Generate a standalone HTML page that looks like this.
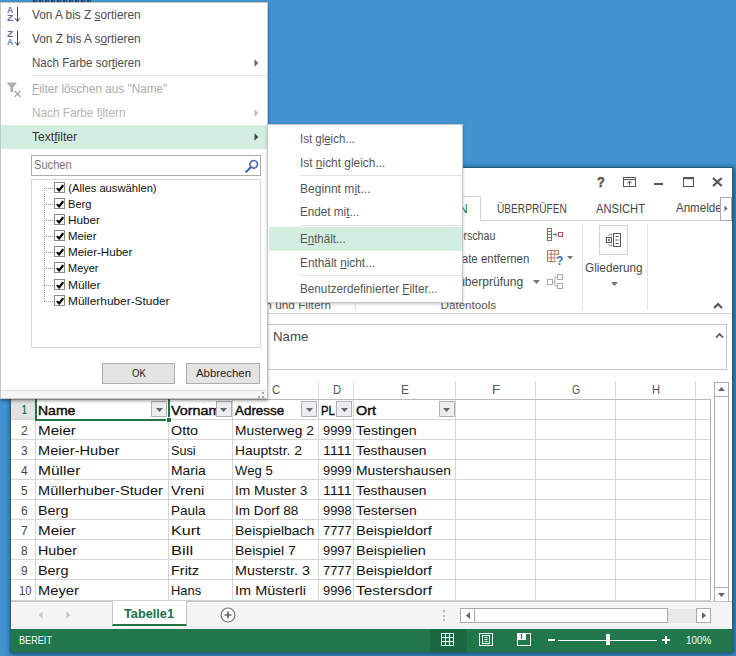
<!DOCTYPE html>
<html lang="de"><head><meta charset="utf-8"><title>Excel Textfilter</title><style>
html,body{margin:0;padding:0}
body{width:736px;height:656px;overflow:hidden;position:relative;background:#4393D1;font-family:"Liberation Sans",sans-serif}
.r{position:absolute;box-sizing:border-box}
.t{position:absolute;white-space:nowrap;line-height:1;transform-origin:0 0}
.t u{text-decoration:underline;text-underline-offset:1px}
.clip{position:absolute;overflow:hidden}
</style></head><body>
<div class="r " style="left:11.00px;top:168.00px;width:721.00px;height:484.00px;background:#fff;box-shadow:0 0 0 1px #255f78,1px 1px 5px 2px rgba(20,80,105,.9);"></div>
<span class="t" style="left:596.60px;top:174.73px;font-size:14.50px;color:#595959;font-weight:bold;transform:scaleX(0.8808);-webkit-text-stroke:0.5px #595959;">?</span>
<svg class="r" style="left:623.00px;top:177.00px" width="14" height="11" viewBox="0 0 14 11"><rect x="0.5" y="0.5" width="12" height="9" fill="none" stroke="#555"/><path d="M0.5 2.5H12.5" stroke="#555"/><path d="M6.5 8.5V4.2M4.3 6.2L6.5 4 8.7 6.2" fill="none" stroke="#555"/></svg>
<div class="r " style="left:654.00px;top:182.50px;width:9.00px;height:2.00px;background:#555;"></div>
<svg class="r" style="left:683.00px;top:177.00px" width="11" height="10" viewBox="0 0 11 10"><rect x="0.5" y="0.5" width="10" height="9" fill="none" stroke="#555"/><rect x="0" y="0" width="11" height="2.2" fill="#555"/></svg>
<svg class="r" style="left:712.00px;top:177.00px" width="11" height="10" viewBox="0 0 11 10"><path d="M1 1L9.7 9M9.7 1L1 9" stroke="#555" stroke-width="2.2"/></svg>
<div class="r " style="left:11.00px;top:220.00px;width:721.00px;height:1.00px;background:#D4D4D4;"></div>
<div class="r " style="left:420.00px;top:196.00px;width:60.50px;height:25.00px;background:#fff;border:1px solid #D4D4D4;border-bottom:none;"></div>
<span class="t" style="left:427.50px;top:201.54px;font-size:13.30px;color:#217346;transform:scaleX(0.8959);">DATEN</span>
<span class="t" style="left:496.60px;top:201.54px;font-size:13.30px;color:#444;transform:scaleX(0.7617);">ÜBERPRÜFEN</span>
<span class="t" style="left:596.00px;top:201.54px;font-size:13.30px;color:#444;transform:scaleX(0.8394);">ANSICHT</span>
<span class="t" style="left:675.50px;top:200.74px;font-size:13.30px;color:#444;transform:scaleX(0.8684);">Anmelden</span>
<div class="r " style="left:720.00px;top:196.50px;width:11.50px;height:24.00px;background:#fff;border:1px solid #ABABAB;"></div>
<svg class="r" style="left:723.50px;top:205.00px" width="4" height="7" viewBox="0 0 4 7"><path d="M0.5 0.5L3.5 3.5 0.5 6.5Z" fill="#666"/></svg>
<span class="t" style="left:432.40px;top:229.84px;font-size:12.00px;color:#4a4a4a;transform:scaleX(0.8883);">Blitzvorschau</span>
<span class="t" style="left:430.28px;top:252.84px;font-size:12.00px;color:#4a4a4a;transform:scaleX(0.9541);">Duplikate entfernen</span>
<span class="t" style="left:426.03px;top:275.84px;font-size:12.00px;color:#4a4a4a;transform:scaleX(1.0042);">Datenüberprüfung</span>
<svg class="r" style="left:533.00px;top:279.50px" width="7" height="4" viewBox="0 0 7 4"><path d="M0 0H7L3.5 4Z" fill="#777"/></svg>
<svg class="r" style="left:546.50px;top:227.50px" width="17" height="14" viewBox="0 0 17 14"><g fill="none" stroke="#9a6a56"><rect x="0.5" y="0.5" width="4" height="12"/><path d="M0.5 3.5H4.5M0.5 6.5H4.5M0.5 9.5H4.5"/><rect x="11.5" y="4.5" width="4" height="4" stroke="#c0504d"/></g><path d="M6 6.5H9.5M8.5 5L10 6.5 8.5 8" stroke="#4a7ab5" fill="none"/></svg>
<svg class="r" style="left:546.50px;top:250.00px" width="27" height="15" viewBox="0 0 27 15"><g fill="none" stroke="#b47a5a"><rect x="0.5" y="0.5" width="11" height="11"/><path d="M0.5 4.2H11.5M0.5 7.9H11.5M4.2 0.5V11.5M7.9 0.5V11.5"/></g><rect x="8.5" y="5" width="8" height="10" fill="#fff"/><text x="9" y="14.5" font-size="12" font-weight="bold" fill="#3b6fb5" font-family="Liberation Sans, sans-serif">?</text><path d="M20 6H26L23 9.5Z" fill="#777"/></svg>
<svg class="r" style="left:546.50px;top:273.50px" width="17" height="16" viewBox="0 0 17 16"><g fill="none" stroke="#aaa"><rect x="0.5" y="5.5" width="5" height="5"/><rect x="10.5" y="0.5" width="5" height="5"/><rect x="10.5" y="9.5" width="5" height="5"/><path d="M5.5 8H8M8 3V12M8 3H10.5M8 12H10.5"/></g></svg>
<div class="r " style="left:355.00px;top:224.00px;width:1.00px;height:86.00px;background:#E2E2E2;"></div>
<div class="r " style="left:581.50px;top:224.00px;width:1.00px;height:86.00px;background:#E2E2E2;"></div>
<div class="r " style="left:646.50px;top:224.00px;width:1.00px;height:86.00px;background:#E2E2E2;"></div>
<div class="r " style="left:598.50px;top:225.00px;width:29.50px;height:30.00px;background:#fff;border:1px solid #D4D4D4;"></div>
<svg class="r" style="left:606.00px;top:232.50px" width="16" height="15" viewBox="0 0 16 15"><g fill="none" stroke="#555"><rect x="7.5" y="0.5" width="7" height="13"/><path d="M9.5 3.5H12.5M9.5 7H12.5M9.5 10.5H12.5"/><rect x="0.5" y="4.5" width="5" height="5"/><path d="M1.8 7H4.2M3 5.8V8.2"/><path d="M3 2.5V1.5H6M3 11.5V12.5H6" stroke-dasharray="1.5 1"/></g></svg>
<span class="t" style="left:585.00px;top:261.84px;font-size:12.00px;color:#4a4a4a;transform:scaleX(0.9792);">Gliederung</span>
<svg class="r" style="left:611.00px;top:281.80px" width="7" height="4" viewBox="0 0 7 4"><path d="M0 0H7L3.5 4Z" fill="#777"/></svg>
<span class="t" style="left:224.00px;top:298.68px;font-size:11.60px;color:#555;transform:scaleX(1.0183);">Sortieren und Filtern</span>
<span class="t" style="left:440.60px;top:298.68px;font-size:11.60px;color:#555;">Datentools</span>
<svg class="r" style="left:713.00px;top:301.50px" width="10" height="7" viewBox="0 0 10 7"><path d="M1 6L5 2 9 6" fill="none" stroke="#555" stroke-width="2"/></svg>
<div class="r " style="left:11.00px;top:313.00px;width:721.00px;height:1.00px;background:#D4D4D4;"></div>
<div class="r " style="left:100.00px;top:324.00px;width:627.00px;height:45.50px;background:#fff;border:1px solid #C6C6C6;"></div>
<span class="t" style="left:273.40px;top:330.86px;font-size:12.80px;color:#444;transform:scaleX(1.0369);">Name</span>
<svg class="r" style="left:714.50px;top:332.00px" width="9" height="7" viewBox="0 0 9 7"><path d="M1 5.5L4.5 2 8 5.5" fill="none" stroke="#666" stroke-width="1.8"/></svg>
<span class="t" style="left:98.55px;top:383.67px;font-size:12.20px;color:#555;transform:scaleX(0.9922);">A</span>
<span class="t" style="left:197.05px;top:383.67px;font-size:12.20px;color:#555;transform:scaleX(0.9922);">B</span>
<span class="t" style="left:272.05px;top:383.67px;font-size:12.20px;color:#555;transform:scaleX(0.9164);">C</span>
<span class="t" style="left:332.55px;top:383.67px;font-size:12.20px;color:#555;transform:scaleX(0.9164);">D</span>
<span class="t" style="left:401.05px;top:383.67px;font-size:12.20px;color:#555;transform:scaleX(0.9922);">E</span>
<span class="t" style="left:492.05px;top:383.67px;font-size:12.20px;color:#555;transform:scaleX(1.0833);">F</span>
<span class="t" style="left:572.05px;top:383.67px;font-size:12.20px;color:#555;transform:scaleX(0.8510);">G</span>
<span class="t" style="left:652.05px;top:383.67px;font-size:12.20px;color:#555;transform:scaleX(0.9164);">H</span>
<div class="r " style="left:168.00px;top:381.00px;width:1.00px;height:18.00px;background:#DADADA;"></div>
<div class="r " style="left:232.00px;top:381.00px;width:1.00px;height:18.00px;background:#DADADA;"></div>
<div class="r " style="left:318.00px;top:381.00px;width:1.00px;height:18.00px;background:#DADADA;"></div>
<div class="r " style="left:353.00px;top:381.00px;width:1.00px;height:18.00px;background:#DADADA;"></div>
<div class="r " style="left:455.00px;top:381.00px;width:1.00px;height:18.00px;background:#DADADA;"></div>
<div class="r " style="left:535.00px;top:381.00px;width:1.00px;height:18.00px;background:#DADADA;"></div>
<div class="r " style="left:615.00px;top:381.00px;width:1.00px;height:18.00px;background:#DADADA;"></div>
<div class="r " style="left:695.00px;top:381.00px;width:1.00px;height:18.00px;background:#DADADA;"></div>
<div class="r " style="left:11.00px;top:400.00px;width:24.00px;height:200.00px;background:#fff;"></div>
<div class="r " style="left:11.00px;top:400.00px;width:24.00px;height:19.00px;background:#E1E1E1;"></div>
<div class="r " style="left:11.00px;top:419.00px;width:700.00px;height:1.00px;background:#D6D6D6;"></div>
<div class="r " style="left:11.00px;top:439.00px;width:700.00px;height:1.00px;background:#D6D6D6;"></div>
<div class="r " style="left:11.00px;top:459.00px;width:700.00px;height:1.00px;background:#D6D6D6;"></div>
<div class="r " style="left:11.00px;top:479.00px;width:700.00px;height:1.00px;background:#D6D6D6;"></div>
<div class="r " style="left:11.00px;top:499.00px;width:700.00px;height:1.00px;background:#D6D6D6;"></div>
<div class="r " style="left:11.00px;top:519.00px;width:700.00px;height:1.00px;background:#D6D6D6;"></div>
<div class="r " style="left:11.00px;top:539.00px;width:700.00px;height:1.00px;background:#D6D6D6;"></div>
<div class="r " style="left:11.00px;top:559.00px;width:700.00px;height:1.00px;background:#D6D6D6;"></div>
<div class="r " style="left:11.00px;top:579.00px;width:700.00px;height:1.00px;background:#D6D6D6;"></div>
<div class="r " style="left:35.00px;top:400.00px;width:1.00px;height:200.00px;background:#D6D6D6;"></div>
<div class="r " style="left:168.00px;top:400.00px;width:1.00px;height:200.00px;background:#D6D6D6;"></div>
<div class="r " style="left:232.00px;top:400.00px;width:1.00px;height:200.00px;background:#D6D6D6;"></div>
<div class="r " style="left:318.00px;top:400.00px;width:1.00px;height:200.00px;background:#D6D6D6;"></div>
<div class="r " style="left:353.00px;top:400.00px;width:1.00px;height:200.00px;background:#D6D6D6;"></div>
<div class="r " style="left:455.00px;top:400.00px;width:1.00px;height:200.00px;background:#D6D6D6;"></div>
<div class="r " style="left:535.00px;top:400.00px;width:1.00px;height:200.00px;background:#D6D6D6;"></div>
<div class="r " style="left:615.00px;top:400.00px;width:1.00px;height:200.00px;background:#D6D6D6;"></div>
<div class="r " style="left:695.00px;top:400.00px;width:1.00px;height:200.00px;background:#D6D6D6;"></div>
<div class="r " style="left:11.00px;top:399.00px;width:700.00px;height:1.00px;background:#BBBBBB;"></div>
<div class="r " style="left:710.00px;top:399.00px;width:1.00px;height:202.00px;background:#ABABAB;"></div>
<div class="r " style="left:11.00px;top:600.00px;width:700.00px;height:1.00px;background:#CFCFCF;"></div>
<span class="t" style="left:21.50px;top:403.36px;font-size:13.40px;color:#217346;font-weight:bold;transform:scaleX(0.6173);">1</span>
<span class="t" style="left:20.90px;top:423.60px;font-size:13.00px;color:#444;transform:scaleX(0.9128);">2</span>
<span class="t" style="left:20.90px;top:443.60px;font-size:13.00px;color:#444;transform:scaleX(0.9128);">3</span>
<span class="t" style="left:20.90px;top:463.60px;font-size:13.00px;color:#444;transform:scaleX(0.9128);">4</span>
<span class="t" style="left:20.90px;top:483.60px;font-size:13.00px;color:#444;transform:scaleX(0.9128);">5</span>
<span class="t" style="left:20.90px;top:503.60px;font-size:13.00px;color:#444;transform:scaleX(0.9128);">6</span>
<span class="t" style="left:20.90px;top:523.60px;font-size:13.00px;color:#444;transform:scaleX(0.9128);">7</span>
<span class="t" style="left:20.90px;top:543.60px;font-size:13.00px;color:#444;transform:scaleX(0.9128);">8</span>
<span class="t" style="left:20.90px;top:563.60px;font-size:13.00px;color:#444;transform:scaleX(0.9128);">9</span>
<span class="t" style="left:19.15px;top:583.60px;font-size:13.00px;color:#444;transform:scaleX(0.8644);">10</span>
<span class="t" style="left:38.40px;top:403.60px;font-size:13.00px;color:#111;transform:scaleX(1.0757);-webkit-text-stroke:0.45px #111;">Name</span>
<div class="clip" style="left:170.70px;top:403.60px;width:45.00px;height:15.60px"><span class="t" style="left:0;top:0;font-size:13.00px;color:#111;-webkit-text-stroke:0.45px #111;transform:scaleX(1.1051);">Vorname</span></div>
<div class="clip" style="left:320.70px;top:403.60px;width:14.20px;height:15.60px"><span class="t" style="left:0;top:0;font-size:13.00px;color:#111;-webkit-text-stroke:0.45px #111;transform:scaleX(0.8640);">PLZ</span></div>
<span class="t" style="left:234.50px;top:403.60px;font-size:13.00px;color:#111;transform:scaleX(1.0316);-webkit-text-stroke:0.45px #111;">Adresse</span>
<span class="t" style="left:355.60px;top:403.60px;font-size:13.00px;color:#111;transform:scaleX(1.1022);-webkit-text-stroke:0.45px #111;">Ort</span>
<span class="t" style="left:38.40px;top:423.60px;font-size:13.00px;color:#111;transform:scaleX(1.1660);">Meier</span>
<span class="t" style="left:170.50px;top:423.60px;font-size:13.00px;color:#111;transform:scaleX(1.1030);">Otto</span>
<span class="t" style="left:322.80px;top:423.60px;font-size:13.00px;color:#111;transform:scaleX(0.9889);">9999</span>
<span class="t" style="left:234.50px;top:423.60px;font-size:13.00px;color:#111;transform:scaleX(1.0602);">Musterweg 2</span>
<span class="t" style="left:355.60px;top:423.60px;font-size:13.00px;color:#111;transform:scaleX(1.0907);">Testingen</span>
<span class="t" style="left:38.40px;top:443.60px;font-size:13.00px;color:#111;transform:scaleX(1.1268);">Meier-Huber</span>
<span class="t" style="left:170.50px;top:443.60px;font-size:13.00px;color:#111;transform:scaleX(0.9728);">Susi</span>
<span class="t" style="left:322.80px;top:443.60px;font-size:13.00px;color:#111;transform:scaleX(1.0988);">1111</span>
<span class="t" style="left:234.50px;top:443.60px;font-size:13.00px;color:#111;transform:scaleX(1.0641);">Hauptstr. 2</span>
<span class="t" style="left:355.60px;top:443.60px;font-size:13.00px;color:#111;transform:scaleX(1.0602);">Testhausen</span>
<span class="t" style="left:38.40px;top:463.60px;font-size:13.00px;color:#111;transform:scaleX(1.1952);">Müller</span>
<span class="t" style="left:170.50px;top:463.60px;font-size:13.00px;color:#111;transform:scaleX(1.0706);">Maria</span>
<span class="t" style="left:322.80px;top:463.60px;font-size:13.00px;color:#111;transform:scaleX(0.9889);">9999</span>
<span class="t" style="left:234.50px;top:463.60px;font-size:13.00px;color:#111;transform:scaleX(1.0096);">Weg 5</span>
<span class="t" style="left:355.60px;top:463.60px;font-size:13.00px;color:#111;transform:scaleX(1.0677);">Mustershausen</span>
<span class="t" style="left:38.40px;top:483.60px;font-size:13.00px;color:#111;transform:scaleX(1.1225);">Müllerhuber-Studer</span>
<span class="t" style="left:170.50px;top:483.60px;font-size:13.00px;color:#111;transform:scaleX(1.1149);">Vreni</span>
<span class="t" style="left:322.80px;top:483.60px;font-size:13.00px;color:#111;transform:scaleX(1.0988);">1111</span>
<span class="t" style="left:234.50px;top:483.60px;font-size:13.00px;color:#111;transform:scaleX(1.0564);">Im Muster 3</span>
<span class="t" style="left:355.60px;top:483.60px;font-size:13.00px;color:#111;transform:scaleX(1.0602);">Testhausen</span>
<span class="t" style="left:38.40px;top:503.60px;font-size:13.00px;color:#111;transform:scaleX(1.1070);">Berg</span>
<span class="t" style="left:170.50px;top:503.60px;font-size:13.00px;color:#111;transform:scaleX(1.0406);">Paula</span>
<span class="t" style="left:322.80px;top:503.60px;font-size:13.00px;color:#111;transform:scaleX(0.9889);">9998</span>
<span class="t" style="left:234.50px;top:503.60px;font-size:13.00px;color:#111;transform:scaleX(1.0447);">Im Dorf 88</span>
<span class="t" style="left:355.60px;top:503.60px;font-size:13.00px;color:#111;transform:scaleX(1.0805);">Testersen</span>
<span class="t" style="left:38.40px;top:523.60px;font-size:13.00px;color:#111;transform:scaleX(1.1660);">Meier</span>
<span class="t" style="left:170.50px;top:523.60px;font-size:13.00px;color:#111;transform:scaleX(1.2414);">Kurt</span>
<span class="t" style="left:322.80px;top:523.60px;font-size:13.00px;color:#111;transform:scaleX(0.9889);">7777</span>
<span class="t" style="left:234.50px;top:523.60px;font-size:13.00px;color:#111;transform:scaleX(1.0771);">Beispielbach</span>
<span class="t" style="left:355.60px;top:523.60px;font-size:13.00px;color:#111;transform:scaleX(1.1174);">Beispieldorf</span>
<span class="t" style="left:38.40px;top:543.60px;font-size:13.00px;color:#111;transform:scaleX(1.0987);">Huber</span>
<span class="t" style="left:170.50px;top:543.60px;font-size:13.00px;color:#111;transform:scaleX(1.2751);">Bill</span>
<span class="t" style="left:322.80px;top:543.60px;font-size:13.00px;color:#111;transform:scaleX(0.9889);">9997</span>
<span class="t" style="left:234.50px;top:543.60px;font-size:13.00px;color:#111;transform:scaleX(1.0804);">Beispiel 7</span>
<span class="t" style="left:355.60px;top:543.60px;font-size:13.00px;color:#111;transform:scaleX(1.1118);">Beispielien</span>
<span class="t" style="left:38.40px;top:563.60px;font-size:13.00px;color:#111;transform:scaleX(1.1070);">Berg</span>
<span class="t" style="left:170.50px;top:563.60px;font-size:13.00px;color:#111;transform:scaleX(1.1120);">Fritz</span>
<span class="t" style="left:322.80px;top:563.60px;font-size:13.00px;color:#111;transform:scaleX(0.9889);">7777</span>
<span class="t" style="left:234.50px;top:563.60px;font-size:13.00px;color:#111;transform:scaleX(1.1029);">Musterstr. 3</span>
<span class="t" style="left:355.60px;top:563.60px;font-size:13.00px;color:#111;transform:scaleX(1.1174);">Beispieldorf</span>
<span class="t" style="left:38.40px;top:583.60px;font-size:13.00px;color:#111;transform:scaleX(1.1324);">Meyer</span>
<span class="t" style="left:170.50px;top:583.60px;font-size:13.00px;color:#111;transform:scaleX(0.9918);">Hans</span>
<span class="t" style="left:322.80px;top:583.60px;font-size:13.00px;color:#111;transform:scaleX(0.9889);">9996</span>
<span class="t" style="left:234.50px;top:583.60px;font-size:13.00px;color:#111;transform:scaleX(1.1155);">Im Müsterli</span>
<span class="t" style="left:355.60px;top:583.60px;font-size:13.00px;color:#111;transform:scaleX(1.1803);">Testersdorf</span>
<div class="r " style="left:151.00px;top:401.00px;width:16.00px;height:16.00px;background:#ECEDF0;border:1px solid #B2B2B2;"></div>
<svg class="r" style="left:155.50px;top:407.50px" width="7" height="4" viewBox="0 0 7 4"><path d="M0 0H7L3.5 4Z" fill="#666"/></svg>
<div class="r " style="left:215.60px;top:401.00px;width:16.00px;height:16.00px;background:#ECEDF0;border:1px solid #B2B2B2;"></div>
<svg class="r" style="left:220.10px;top:407.50px" width="7" height="4" viewBox="0 0 7 4"><path d="M0 0H7L3.5 4Z" fill="#666"/></svg>
<div class="r " style="left:301.20px;top:401.00px;width:16.00px;height:16.00px;background:#ECEDF0;border:1px solid #B2B2B2;"></div>
<svg class="r" style="left:305.70px;top:407.50px" width="7" height="4" viewBox="0 0 7 4"><path d="M0 0H7L3.5 4Z" fill="#666"/></svg>
<div class="r " style="left:336.30px;top:401.00px;width:16.00px;height:16.00px;background:#ECEDF0;border:1px solid #B2B2B2;"></div>
<svg class="r" style="left:340.80px;top:407.50px" width="7" height="4" viewBox="0 0 7 4"><path d="M0 0H7L3.5 4Z" fill="#666"/></svg>
<div class="r " style="left:438.60px;top:401.00px;width:16.00px;height:16.00px;background:#ECEDF0;border:1px solid #B2B2B2;"></div>
<svg class="r" style="left:443.10px;top:407.50px" width="7" height="4" viewBox="0 0 7 4"><path d="M0 0H7L3.5 4Z" fill="#666"/></svg>
<div class="r " style="left:35.00px;top:396.00px;width:135.00px;height:25.00px;border:2px solid #217346;"></div>
<div class="r " style="left:166.00px;top:417.00px;width:6.00px;height:6.00px;background:#217346;border:1px solid #fff;"></div>
<div class="r " style="left:714.00px;top:382.00px;width:15.00px;height:220.00px;background:#fff;border:1px solid #ABABAB;"></div>
<div class="r " style="left:714.00px;top:382.00px;width:15.00px;height:15.00px;background:#fff;border:1px solid #ABABAB;"></div>
<svg class="r" style="left:718.00px;top:387.00px" width="7" height="4" viewBox="0 0 7 4"><path d="M0 4H7L3.5 0Z" fill="#666"/></svg>
<div class="r " style="left:714.00px;top:587.00px;width:15.00px;height:15.00px;background:#fff;border:1px solid #ABABAB;"></div>
<svg class="r" style="left:718.00px;top:592.50px" width="7" height="4" viewBox="0 0 7 4"><path d="M0 0H7L3.5 4Z" fill="#666"/></svg>
<div class="r " style="left:11.00px;top:601.00px;width:721.00px;height:28.50px;background:#F4F4F4;"></div>
<div class="r " style="left:11.00px;top:601.00px;width:101.00px;height:1.00px;background:#C6C6C6;"></div>
<div class="r " style="left:111.50px;top:600.50px;width:75.50px;height:25.00px;background:#fff;border-left:1px solid #C6C6C6;border-right:1px solid #C6C6C6;border-bottom:2px solid #217346;"></div>
<div class="r " style="left:187.00px;top:601.00px;width:545.00px;height:1.00px;background:#C6C6C6;"></div>
<span class="t" style="left:123.80px;top:606.66px;font-size:13.40px;color:#217346;font-weight:bold;transform:scaleX(0.9500);">Tabelle1</span>
<svg class="r" style="left:38.00px;top:611.00px" width="5" height="8" viewBox="0 0 5 8"><path d="M4.5 0.5V7.5L0.5 4Z" fill="#C8C8C8"/></svg>
<svg class="r" style="left:66.00px;top:611.00px" width="5" height="8" viewBox="0 0 5 8"><path d="M0.5 0.5V7.5L4.5 4Z" fill="#C8C8C8"/></svg>
<svg class="r" style="left:220.00px;top:607.00px" width="16" height="16" viewBox="0 0 16 16"><circle cx="8" cy="8" r="7" fill="#fff" stroke="#777" stroke-width="1.2"/><path d="M8 4.5V11.5M4.5 8H11.5" stroke="#666" stroke-width="1.6"/></svg>
<div class="r " style="left:443.00px;top:610.00px;width:2.00px;height:2.00px;background:#BBB;"></div>
<div class="r " style="left:443.00px;top:614.50px;width:2.00px;height:2.00px;background:#BBB;"></div>
<div class="r " style="left:443.00px;top:619.00px;width:2.00px;height:2.00px;background:#BBB;"></div>
<div class="r " style="left:460.00px;top:609.00px;width:250.00px;height:14.00px;background:#E8E8E8;"></div>
<div class="r " style="left:460.00px;top:608.00px;width:15.00px;height:15.00px;background:#fff;border:1px solid #ABABAB;"></div>
<svg class="r" style="left:465.50px;top:612.00px" width="4" height="7" viewBox="0 0 4 7"><path d="M4 0V7L0 3.5Z" fill="#666"/></svg>
<div class="r " style="left:474.00px;top:608.00px;width:194.00px;height:15.00px;background:#fff;border:1px solid #ABABAB;"></div>
<div class="r " style="left:696.00px;top:608.00px;width:15.00px;height:15.00px;background:#fff;border:1px solid #ABABAB;"></div>
<svg class="r" style="left:701.50px;top:612.00px" width="4" height="7" viewBox="0 0 4 7"><path d="M0 0V7L4 3.5Z" fill="#666"/></svg>
<div class="r " style="left:11.00px;top:629.00px;width:721.00px;height:23.00px;background:#22774A;"></div>
<span class="t" style="left:18.80px;top:634.38px;font-size:11.60px;color:#fff;transform:scaleX(0.7876);">BEREIT</span>
<div class="r " style="left:429.50px;top:629.00px;width:37.00px;height:23.00px;background:#1C693F;"></div>
<svg class="r" style="left:441.00px;top:633.00px" width="13" height="13" viewBox="0 0 13 13"><rect x="0.5" y="0.5" width="12" height="12" fill="none" stroke="#fff"/><path d="M0.5 4.5H12.5M0.5 8.5H12.5M4.5 0.5V12.5M8.5 0.5V12.5" stroke="#fff" fill="none"/></svg>
<svg class="r" style="left:479.00px;top:633.00px" width="14" height="13" viewBox="0 0 14 13"><rect x="0.5" y="0.5" width="13" height="12" fill="none" stroke="#fff"/><rect x="3.5" y="2.5" width="7" height="8" fill="none" stroke="#fff"/><path d="M5.5 4.5H8.5M5.5 6.5H8.5M5.5 8.5H8.5" stroke="#fff"/></svg>
<svg class="r" style="left:517.00px;top:633.00px" width="14" height="13" viewBox="0 0 14 13"><rect x="0.5" y="0.5" width="13" height="12" fill="none" stroke="#fff"/><rect x="1" y="1" width="8" height="6" fill="#fff"/><path d="M4.5 1V6" stroke="#22774A" stroke-width="1.2"/></svg>
<div class="r " style="left:548.00px;top:639.00px;width:6.50px;height:2.00px;background:#fff;"></div>
<div class="r " style="left:558.30px;top:639.50px;width:99.20px;height:1.00px;background:#fff;"></div>
<div class="r " style="left:605.80px;top:633.70px;width:4.50px;height:11.00px;background:#fff;"></div>
<div class="r " style="left:661.50px;top:639.00px;width:8.50px;height:2.00px;background:#fff;"></div>
<div class="r " style="left:664.75px;top:635.70px;width:2.00px;height:8.50px;background:#fff;"></div>
<span class="t" style="left:686.30px;top:633.98px;font-size:11.60px;color:#fff;transform:scaleX(0.8495);">100%</span>
<div class="r " style="left:0.00px;top:2.00px;width:268.00px;height:397.00px;background:#fff;border:1px solid #C6C6C6;box-shadow:0 2px 3px rgba(0,0,0,.36);"></div>
<div class="r " style="left:1.00px;top:125.00px;width:266.00px;height:24.00px;background:#D3EEE1;"></div>
<div class="r " style="left:32.00px;top:75.00px;width:234.50px;height:1.00px;background:#E1E1E1;"></div>
<span class="t" style="left:32.30px;top:7.80px;font-size:13.00px;color:#4d4d4d;transform:scaleX(0.9116);">Von A bis Z <u>s</u>ortieren</span>
<span class="t" style="left:32.30px;top:31.70px;font-size:13.00px;color:#4d4d4d;transform:scaleX(0.9116);">Von Z bis A s<u>o</u>rtieren</span>
<span class="t" style="left:32.30px;top:55.60px;font-size:13.00px;color:#4d4d4d;transform:scaleX(0.8902);">Nach Farbe sor<u>t</u>ieren</span>
<span class="t" style="left:32.30px;top:81.80px;font-size:13.00px;color:#ABABAB;transform:scaleX(0.9050);"><u>F</u>ilter löschen aus &quot;Name&quot;</span>
<span class="t" style="left:32.30px;top:105.50px;font-size:13.00px;color:#B4B4B4;transform:scaleX(0.9040);">Nach Farbe f<u>i</u>ltern</span>
<span class="t" style="left:32.30px;top:129.70px;font-size:13.00px;color:#333;transform:scaleX(0.9297);">Text<u>f</u>ilter</span>
<svg class="r" style="left:254.00px;top:58.50px" width="5" height="8" viewBox="0 0 5 8"><path d="M0.5 0.3V7.7L4.3 4Z" fill="#666"/></svg>
<svg class="r" style="left:254.00px;top:108.50px" width="5" height="8" viewBox="0 0 5 8"><path d="M0.5 0.3V7.7L4.3 4Z" fill="#BBB"/></svg>
<svg class="r" style="left:254.00px;top:133.00px" width="5" height="8" viewBox="0 0 5 8"><path d="M0.5 0.3V7.7L4.3 4Z" fill="#444"/></svg>
<span class="t" style="left:6.80px;top:5.81px;font-size:9.20px;color:#6F72B0;font-weight:bold;transform:scaleX(0.9332);">A</span>
<span class="t" style="left:6.80px;top:13.81px;font-size:9.20px;color:#7A5C9C;font-weight:bold;transform:scaleX(1.1036);">Z</span>
<svg class="r" style="left:14.00px;top:7.00px" width="8" height="16" viewBox="0 0 8 16"><path d="M3.5 0V14.3M1 11.2L3.5 14.3 6 11.2" fill="none" stroke="#444" stroke-width="1"/></svg>
<span class="t" style="left:6.80px;top:29.81px;font-size:9.20px;color:#7A5C9C;font-weight:bold;transform:scaleX(1.1036);">Z</span>
<span class="t" style="left:6.80px;top:37.81px;font-size:9.20px;color:#5C86B8;font-weight:bold;transform:scaleX(0.9332);">A</span>
<svg class="r" style="left:14.00px;top:31.00px" width="8" height="16" viewBox="0 0 8 16"><path d="M3.5 0V14.3M1 11.2L3.5 14.3 6 11.2" fill="none" stroke="#444" stroke-width="1"/></svg>
<svg class="r" style="left:6.00px;top:81.50px" width="16" height="16" viewBox="0 0 16 16"><path d="M0.5 0.5H11L7 5.5V10H4.5V5.5Z" fill="#ABABAB"/><path d="M8.5 9L14.5 15M14.5 9L8.5 15" stroke="#ABABAB" stroke-width="1.4"/></svg>
<div class="r " style="left:31.00px;top:155.00px;width:230.00px;height:21.00px;background:#fff;border:1px solid #ABABAB;"></div>
<span class="t" style="left:34.00px;top:158.84px;font-size:12.00px;color:#777;transform:scaleX(0.9261);">Suchen</span>
<svg class="r" style="left:245.00px;top:158.50px" width="14" height="14" viewBox="0 0 14 14"><circle cx="8.7" cy="5.3" r="3.8" fill="none" stroke="#4A67A8" stroke-width="1.7"/><path d="M6 8L1.3 12.7" stroke="#4A67A8" stroke-width="2.2" stroke-linecap="round"/></svg>
<div class="r " style="left:31.00px;top:179.00px;width:230.00px;height:169.00px;background:#fff;border:1px solid #D9D9D9;"></div>
<div class="r " style="left:54.00px;top:182.00px;width:11.00px;height:11.00px;background:#fff;border:1px solid #8A8A8A;"></div>
<svg class="r" style="left:55.50px;top:183.50px" width="8" height="8" viewBox="0 0 8 8"><path d="M0.9 4.1L3.1 6.5 7.2 1.2" fill="none" stroke="#000" stroke-width="2.1"/></svg>
<span class="t" style="left:68.30px;top:182.52px;font-size:11.20px;color:#111;">(Alles auswählen)</span>
<div class="r " style="left:44.00px;top:188.00px;width:9.00px;height:1.00px;border-top:1px dotted #999;"></div>
<div class="r " style="left:54.00px;top:198.00px;width:11.00px;height:11.00px;background:#fff;border:1px solid #8A8A8A;"></div>
<svg class="r" style="left:55.50px;top:199.50px" width="8" height="8" viewBox="0 0 8 8"><path d="M0.9 4.1L3.1 6.5 7.2 1.2" fill="none" stroke="#000" stroke-width="2.1"/></svg>
<span class="t" style="left:68.30px;top:198.52px;font-size:11.20px;color:#111;transform:scaleX(0.9932);">Berg</span>
<div class="r " style="left:44.00px;top:204.00px;width:9.00px;height:1.00px;border-top:1px dotted #999;"></div>
<div class="r " style="left:54.00px;top:214.00px;width:11.00px;height:11.00px;background:#fff;border:1px solid #8A8A8A;"></div>
<svg class="r" style="left:55.50px;top:215.50px" width="8" height="8" viewBox="0 0 8 8"><path d="M0.9 4.1L3.1 6.5 7.2 1.2" fill="none" stroke="#000" stroke-width="2.1"/></svg>
<span class="t" style="left:68.30px;top:214.52px;font-size:11.20px;color:#111;transform:scaleX(1.0489);">Huber</span>
<div class="r " style="left:44.00px;top:220.00px;width:9.00px;height:1.00px;border-top:1px dotted #999;"></div>
<div class="r " style="left:54.00px;top:230.00px;width:11.00px;height:11.00px;background:#fff;border:1px solid #8A8A8A;"></div>
<svg class="r" style="left:55.50px;top:231.50px" width="8" height="8" viewBox="0 0 8 8"><path d="M0.9 4.1L3.1 6.5 7.2 1.2" fill="none" stroke="#000" stroke-width="2.1"/></svg>
<span class="t" style="left:68.30px;top:230.52px;font-size:11.20px;color:#111;transform:scaleX(1.0176);">Meier</span>
<div class="r " style="left:44.00px;top:236.00px;width:9.00px;height:1.00px;border-top:1px dotted #999;"></div>
<div class="r " style="left:54.00px;top:246.00px;width:11.00px;height:11.00px;background:#fff;border:1px solid #8A8A8A;"></div>
<svg class="r" style="left:55.50px;top:247.50px" width="8" height="8" viewBox="0 0 8 8"><path d="M0.9 4.1L3.1 6.5 7.2 1.2" fill="none" stroke="#000" stroke-width="2.1"/></svg>
<span class="t" style="left:68.30px;top:246.52px;font-size:11.20px;color:#111;transform:scaleX(1.0362);">Meier-Huber</span>
<div class="r " style="left:44.00px;top:252.00px;width:9.00px;height:1.00px;border-top:1px dotted #999;"></div>
<div class="r " style="left:54.00px;top:262.00px;width:11.00px;height:11.00px;background:#fff;border:1px solid #8A8A8A;"></div>
<svg class="r" style="left:55.50px;top:263.50px" width="8" height="8" viewBox="0 0 8 8"><path d="M0.9 4.1L3.1 6.5 7.2 1.2" fill="none" stroke="#000" stroke-width="2.1"/></svg>
<span class="t" style="left:68.30px;top:262.52px;font-size:11.20px;color:#111;transform:scaleX(0.9801);">Meyer</span>
<div class="r " style="left:44.00px;top:268.00px;width:9.00px;height:1.00px;border-top:1px dotted #999;"></div>
<div class="r " style="left:54.00px;top:279.00px;width:11.00px;height:11.00px;background:#fff;border:1px solid #8A8A8A;"></div>
<svg class="r" style="left:55.50px;top:280.50px" width="8" height="8" viewBox="0 0 8 8"><path d="M0.9 4.1L3.1 6.5 7.2 1.2" fill="none" stroke="#000" stroke-width="2.1"/></svg>
<span class="t" style="left:68.30px;top:279.52px;font-size:11.20px;color:#111;transform:scaleX(1.0657);">Müller</span>
<div class="r " style="left:44.00px;top:285.00px;width:9.00px;height:1.00px;border-top:1px dotted #999;"></div>
<div class="r " style="left:54.00px;top:295.00px;width:11.00px;height:11.00px;background:#fff;border:1px solid #8A8A8A;"></div>
<svg class="r" style="left:55.50px;top:296.50px" width="8" height="8" viewBox="0 0 8 8"><path d="M0.9 4.1L3.1 6.5 7.2 1.2" fill="none" stroke="#000" stroke-width="2.1"/></svg>
<span class="t" style="left:68.30px;top:295.52px;font-size:11.20px;color:#111;transform:scaleX(1.0607);">Müllerhuber-Studer</span>
<div class="r " style="left:44.00px;top:301.00px;width:9.00px;height:1.00px;border-top:1px dotted #999;"></div>
<div class="r " style="left:44.00px;top:188.00px;width:1.00px;height:113.00px;border-left:1px dotted #999;"></div>
<div class="r " style="left:102.20px;top:363.20px;width:73.00px;height:20.50px;background:#E3E3E3;border:1px solid #ADADAD;"></div>
<span class="t" style="left:132.00px;top:367.61px;font-size:11.80px;color:#222;transform:scaleX(0.8212);">OK</span>
<div class="r " style="left:186.00px;top:363.20px;width:74.00px;height:20.50px;background:#E3E3E3;border:1px solid #ADADAD;"></div>
<span class="t" style="left:195.50px;top:367.51px;font-size:11.80px;color:#222;transform:scaleX(0.9636);">Abbrechen</span>
<div class="r " style="left:1.00px;top:389.50px;width:266.00px;height:8.50px;background:#F6F6F6;border-top:1px solid #DDD;"></div>
<div class="r " style="left:262.00px;top:392.00px;width:2.00px;height:2.00px;background:#A8A8A8;"></div>
<div class="r " style="left:258.00px;top:396.00px;width:2.00px;height:2.00px;background:#A8A8A8;"></div>
<div class="r " style="left:262.00px;top:396.00px;width:2.00px;height:2.00px;background:#A8A8A8;"></div>
<div class="r " style="left:33.00px;top:0.00px;width:59.00px;height:2.00px;background:repeating-linear-gradient(90deg,#1d2b4a 0 2px,#3b6fa8 2px 3px,#22345a 3px 4px,#4a8ac4 4px 6px);opacity:.85;"></div>
<div class="r " style="left:267.00px;top:124.00px;width:196.00px;height:179.00px;background:#fff;border:1px solid #C6C6C6;box-shadow:0 1px 3px rgba(0,0,0,.22);"></div>
<div class="r " style="left:269.00px;top:227.30px;width:193.00px;height:23.40px;background:#D3EEE1;"></div>
<div class="r " style="left:300.00px;top:175.30px;width:161.50px;height:1.00px;background:#E1E1E1;"></div>
<div class="r " style="left:300.00px;top:225.20px;width:161.50px;height:1.00px;background:#E1E1E1;"></div>
<div class="r " style="left:300.00px;top:275.30px;width:161.50px;height:1.00px;background:#E1E1E1;"></div>
<span class="t" style="left:300.40px;top:131.70px;font-size:13.00px;color:#555;transform:scaleX(0.8818);">Ist gl<u>e</u>ich...</span>
<span class="t" style="left:300.40px;top:155.80px;font-size:13.00px;color:#555;transform:scaleX(0.9151);">Ist <u>n</u>icht gleich...</span>
<span class="t" style="left:300.40px;top:181.60px;font-size:13.00px;color:#555;transform:scaleX(0.9292);">Beginnt m<u>i</u>t...</span>
<span class="t" style="left:300.40px;top:205.30px;font-size:13.00px;color:#555;transform:scaleX(0.9003);">Endet mi<u>t</u>...</span>
<span class="t" style="left:300.40px;top:231.70px;font-size:13.00px;color:#555;transform:scaleX(0.8886);">E<u>n</u>thält...</span>
<span class="t" style="left:300.40px;top:255.50px;font-size:13.00px;color:#555;transform:scaleX(0.9103);">Enthält <u>n</u>icht...</span>
<span class="t" style="left:300.40px;top:281.60px;font-size:13.00px;color:#555;transform:scaleX(0.9018);">Benutzerdefinierter <u>F</u>ilter...</span>
</body></html>
